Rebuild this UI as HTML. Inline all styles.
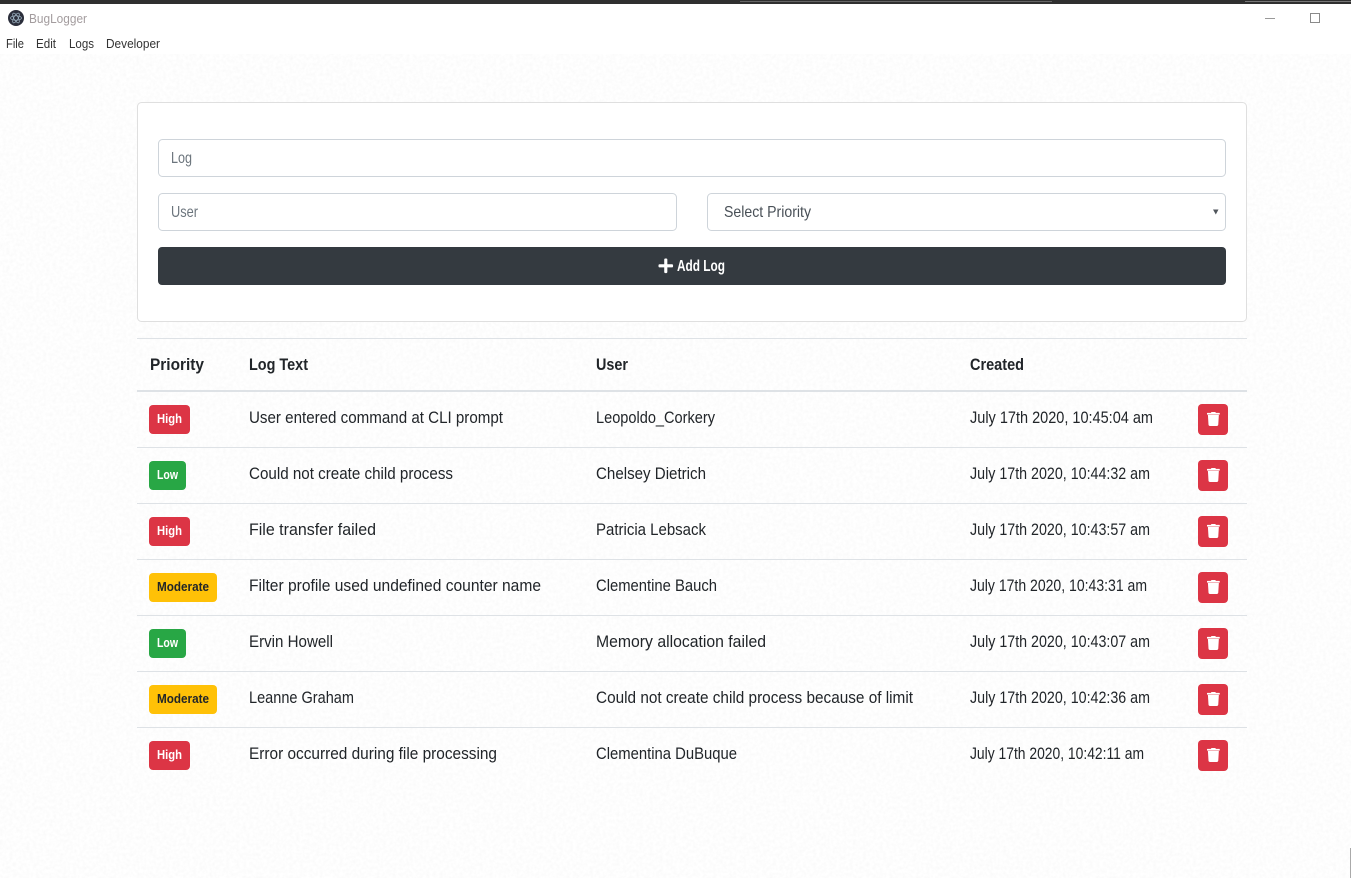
<!DOCTYPE html>
<html><head><meta charset="utf-8"><title>BugLogger</title>
<style>
html,body{margin:0;padding:0;width:1351px;height:878px;overflow:hidden;background:#fff}
svg{display:block;position:absolute;left:0;top:0}
text{font-family:"Liberation Sans",sans-serif;font-size:17px;fill:#212529}
.b{font-weight:bold}
.bd{font-weight:bold;font-size:13px;fill:#fff}
.m{font-size:12.5px;fill:#333;font-family:"Liberation Sans",sans-serif}
.ph{fill:#6c757d;font-size:16px}
</style></head>
<body>
<svg width="1351" height="878" viewBox="0 0 1351 878" xmlns="http://www.w3.org/2000/svg">
<defs>
<filter id="n" x="0" y="0" width="100%" height="100%">
<feTurbulence type="fractalNoise" baseFrequency="0.3" numOctaves="2" seed="4"/>
<feColorMatrix type="matrix" values="0 0 0 0 .45  0 0 0 0 .45  0 0 0 0 .45  .13 0 0 0 -.04"/>
</filter>
<path id="tr" d="M432 32H312l-9.4-18.7A24 24 0 0 0 281.1 0H166.8a23.72 23.72 0 0 0-21.4 13.3L136 32H16A16 16 0 0 0 0 48v32a16 16 0 0 0 16 16h416a16 16 0 0 0 16-16V48a16 16 0 0 0-16-16zM53.2 467a48 48 0 0 0 47.9 45h245.8a48 48 0 0 0 47.9-45L416 112H32z" fill="#fff" transform="scale(.0285 .0273)"/>
</defs>
<rect width="1351" height="878" fill="#fff"/>
<rect y="54" width="1351" height="824" fill="#fff" filter="url(#n)"/>
<rect width="1351" height="4" fill="#2f2f2f"/>
<rect x="740" y="1" width="312" height="1" fill="#666"/>
<rect x="1245" y="1" width="106" height="1" fill="#777"/>

<circle cx="16" cy="18" r="8" fill="#2b2e3b"/>
<g fill="none" stroke="#9fb4c4" stroke-width=".7"><ellipse cx="16" cy="18" rx="5.5" ry="2.2"/><ellipse cx="16" cy="18" rx="5.5" ry="2.2" transform="rotate(60 16 18)"/><ellipse cx="16" cy="18" rx="5.5" ry="2.2" transform="rotate(120 16 18)"/></g>
<text class="m" x="29" y="23" textLength="58" lengthAdjust="spacingAndGlyphs" style="fill:#a39c9e">BugLogger</text>
<text class="m" x="6" y="48" textLength="18" lengthAdjust="spacingAndGlyphs">File</text>
<text class="m" x="36" y="48" textLength="20" lengthAdjust="spacingAndGlyphs">Edit</text>
<text class="m" x="69" y="48" textLength="25" lengthAdjust="spacingAndGlyphs">Logs</text>
<text class="m" x="106" y="48" textLength="54" lengthAdjust="spacingAndGlyphs">Developer</text>
<rect x="1265" y="18" width="10" height="1" fill="#999"/>
<rect x="1310.5" y="13.5" width="9" height="9" fill="none" stroke="#8a8a8a"/>

<rect x="137.5" y="102.5" width="1109" height="219" rx="4" fill="#fff" stroke="#dfdfdf"/>
<rect x="158.5" y="139.5" width="1067" height="37" rx="4" fill="#fff" stroke="#ced4da"/>
<rect x="158.5" y="193.5" width="518" height="37" rx="4" fill="#fff" stroke="#ced4da"/>
<rect x="707.5" y="193.5" width="518" height="37" rx="4" fill="#fff" stroke="#ced4da"/>
<rect x="158" y="247" width="1068" height="38" rx="4" fill="#343a40"/>
<text class="ph" x="171" y="163" textLength="21" lengthAdjust="spacingAndGlyphs">Log</text>
<text class="ph" x="171" y="217" textLength="27" lengthAdjust="spacingAndGlyphs">User</text>
<text x="724" y="217" textLength="87" lengthAdjust="spacingAndGlyphs" style="fill:#495057;font-size:16px">Select Priority</text>
<path d="M1213 209.5h5.5l-2.7 5z" fill="#50565c"/>
<path transform="translate(658.5 257.5) scale(.0325)" fill="#fff" d="M416 208H272V64c0-17.67-14.33-32-32-32h-32c-17.67 0-32 14.33-32 32v144H32c-17.67 0-32 14.33-32 32v32c0 17.67 14.33 32 32 32h144v144c0 17.67 14.33 32 32 32h32c17.67 0 32-14.33 32-32V304h144c17.67 0 32-14.33 32-32v-32c0-17.67-14.33-32-32-32z"/>
<text class="b" x="677" y="271" textLength="48" lengthAdjust="spacingAndGlyphs" style="fill:#fff;font-size:16px">Add Log</text>

<rect x="137" y="338" width="1110" height="1" fill="#dee2e6"/>
<rect x="137" y="390" width="1110" height="2" fill="#dee2e6"/>
<text class="b" x="150" y="370" textLength="54" lengthAdjust="spacingAndGlyphs">Priority</text>
<text class="b" x="249" y="370" textLength="59" lengthAdjust="spacingAndGlyphs">Log Text</text>
<text class="b" x="596" y="370" textLength="32" lengthAdjust="spacingAndGlyphs">User</text>
<text class="b" x="970" y="370" textLength="54" lengthAdjust="spacingAndGlyphs">Created</text>

<g fill="#dee2e6">
<rect x="137" y="447" width="1110" height="1"/><rect x="137" y="503" width="1110" height="1"/><rect x="137" y="559" width="1110" height="1"/><rect x="137" y="615" width="1110" height="1"/><rect x="137" y="671" width="1110" height="1"/><rect x="137" y="727" width="1110" height="1"/>
</g>

<!-- row 1 -->
<rect x="149" y="405" width="41" height="29" rx="4" fill="#dc3545"/>
<text class="bd" x="157" y="423" textLength="25" lengthAdjust="spacingAndGlyphs">High</text>
<text x="249" y="423" textLength="254" lengthAdjust="spacingAndGlyphs">User entered command at CLI prompt</text>
<text x="596" y="423" textLength="119" lengthAdjust="spacingAndGlyphs">Leopoldo_Corkery</text>
<text x="970" y="423" textLength="183" lengthAdjust="spacingAndGlyphs">July 17th 2020, 10:45:04 am</text>
<rect x="1198" y="404" width="30" height="31" rx="4" fill="#dc3545"/><use href="#tr" transform="translate(1207 412)"/>

<!-- row 2 -->
<rect x="149" y="461" width="37" height="29" rx="4" fill="#28a745"/>
<text class="bd" x="157" y="479" textLength="21" lengthAdjust="spacingAndGlyphs">Low</text>
<text x="249" y="479" textLength="204" lengthAdjust="spacingAndGlyphs">Could not create child process</text>
<text x="596" y="479" textLength="110" lengthAdjust="spacingAndGlyphs">Chelsey Dietrich</text>
<text x="970" y="479" textLength="180" lengthAdjust="spacingAndGlyphs">July 17th 2020, 10:44:32 am</text>
<rect x="1198" y="460" width="30" height="31" rx="4" fill="#dc3545"/><use href="#tr" transform="translate(1207 468)"/>

<!-- row 3 -->
<rect x="149" y="517" width="41" height="29" rx="4" fill="#dc3545"/>
<text class="bd" x="157" y="535" textLength="25" lengthAdjust="spacingAndGlyphs">High</text>
<text x="249" y="535" textLength="127" lengthAdjust="spacingAndGlyphs">File transfer failed</text>
<text x="596" y="535" textLength="110" lengthAdjust="spacingAndGlyphs">Patricia Lebsack</text>
<text x="970" y="535" textLength="180" lengthAdjust="spacingAndGlyphs">July 17th 2020, 10:43:57 am</text>
<rect x="1198" y="516" width="30" height="31" rx="4" fill="#dc3545"/><use href="#tr" transform="translate(1207 524)"/>

<!-- row 4 -->
<rect x="149" y="573" width="68" height="29" rx="4" fill="#ffc107"/>
<text class="bd" x="157" y="591" textLength="52" lengthAdjust="spacingAndGlyphs" style="fill:#212529">Moderate</text>
<text x="249" y="591" textLength="292" lengthAdjust="spacingAndGlyphs">Filter profile used undefined counter name</text>
<text x="596" y="591" textLength="121" lengthAdjust="spacingAndGlyphs">Clementine Bauch</text>
<text x="970" y="591" textLength="177" lengthAdjust="spacingAndGlyphs">July 17th 2020, 10:43:31 am</text>
<rect x="1198" y="572" width="30" height="31" rx="4" fill="#dc3545"/><use href="#tr" transform="translate(1207 580)"/>

<!-- row 5 -->
<rect x="149" y="629" width="37" height="29" rx="4" fill="#28a745"/>
<text class="bd" x="157" y="647" textLength="21" lengthAdjust="spacingAndGlyphs">Low</text>
<text x="249" y="647" textLength="84" lengthAdjust="spacingAndGlyphs">Ervin Howell</text>
<text x="596" y="647" textLength="170" lengthAdjust="spacingAndGlyphs">Memory allocation failed</text>
<text x="970" y="647" textLength="180" lengthAdjust="spacingAndGlyphs">July 17th 2020, 10:43:07 am</text>
<rect x="1198" y="628" width="30" height="31" rx="4" fill="#dc3545"/><use href="#tr" transform="translate(1207 636)"/>

<!-- row 6 -->
<rect x="149" y="685" width="68" height="29" rx="4" fill="#ffc107"/>
<text class="bd" x="157" y="703" textLength="52" lengthAdjust="spacingAndGlyphs" style="fill:#212529">Moderate</text>
<text x="249" y="703" textLength="105" lengthAdjust="spacingAndGlyphs">Leanne Graham</text>
<text x="596" y="703" textLength="317" lengthAdjust="spacingAndGlyphs">Could not create child process because of limit</text>
<text x="970" y="703" textLength="180" lengthAdjust="spacingAndGlyphs">July 17th 2020, 10:42:36 am</text>
<rect x="1198" y="684" width="30" height="31" rx="4" fill="#dc3545"/><use href="#tr" transform="translate(1207 692)"/>

<!-- row 7 -->
<rect x="149" y="741" width="41" height="29" rx="4" fill="#dc3545"/>
<text class="bd" x="157" y="759" textLength="25" lengthAdjust="spacingAndGlyphs">High</text>
<text x="249" y="759" textLength="248" lengthAdjust="spacingAndGlyphs">Error occurred during file processing</text>
<text x="596" y="759" textLength="141" lengthAdjust="spacingAndGlyphs">Clementina DuBuque</text>
<text x="970" y="759" textLength="174" lengthAdjust="spacingAndGlyphs">July 17th 2020, 10:42:11 am</text>
<rect x="1198" y="740" width="30" height="31" rx="4" fill="#dc3545"/><use href="#tr" transform="translate(1207 748)"/>

<rect x="1350" y="848" width="1" height="30" fill="#aaa"/>
</svg>
</body></html>
